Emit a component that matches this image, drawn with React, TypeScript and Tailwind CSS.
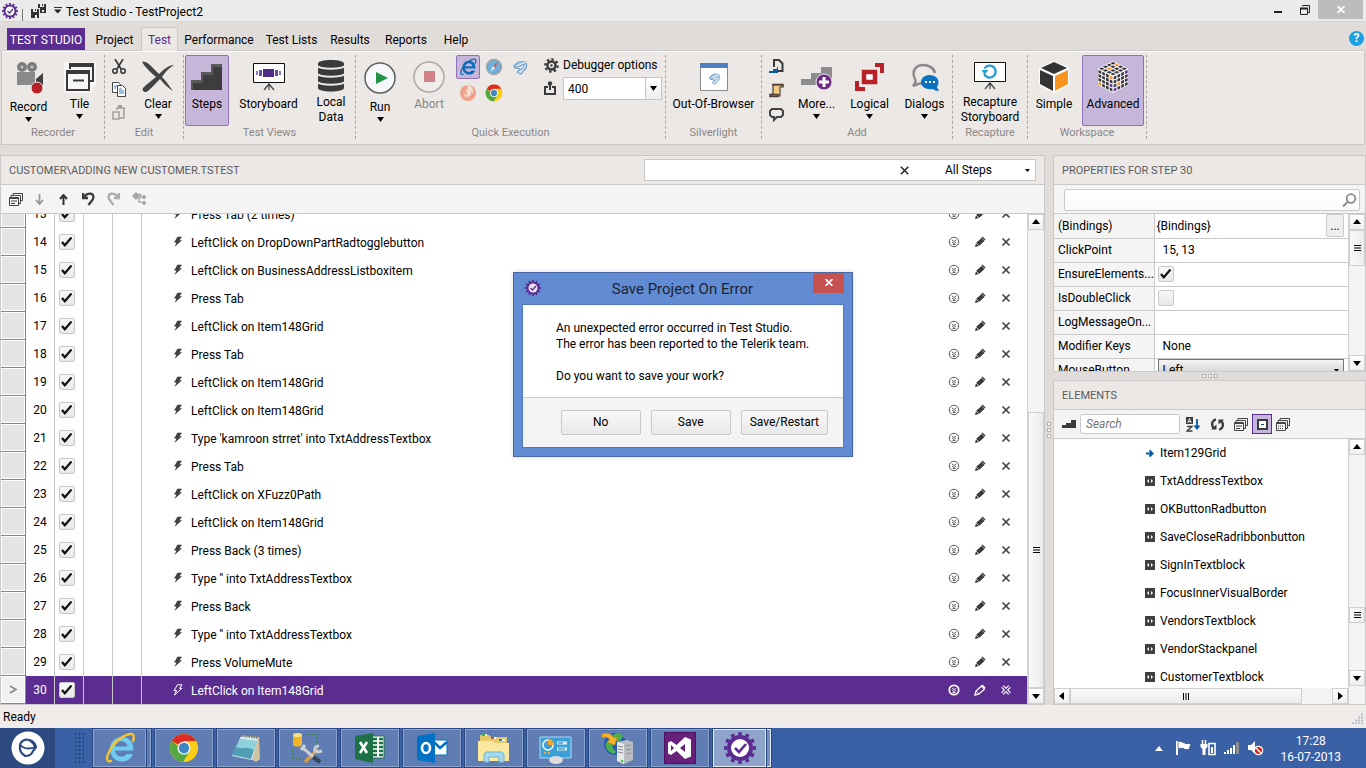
import { ReactNode, useState } from "react";
import clsx from "clsx";

type IconProps = {
	w: number;
	h?: number;
	box?: string;
	className?: string;
	children: ReactNode;
};

const Icon = ({ w, h = w, box, className, children }: IconProps) => (
	<svg
		width={w}
		height={h}
		viewBox={box ?? `0 0 ${w} ${h}`}
		fill="none"
		className={clsx("shrink-0", className)}
		aria-hidden="true"
	>
		{children}
	</svg>
);

const steps = [
	{ id: 13, text: "Press Tab (2 times)" },
	{ id: 14, text: "LeftClick on DropDownPartRadtogglebutton" },
	{ id: 15, text: "LeftClick on BusinessAddressListboxitem" },
	{ id: 16, text: "Press Tab" },
	{ id: 17, text: "LeftClick on Item148Grid" },
	{ id: 18, text: "Press Tab" },
	{ id: 19, text: "LeftClick on Item148Grid" },
	{ id: 20, text: "LeftClick on Item148Grid" },
	{ id: 21, text: "Type 'kamroon strret' into TxtAddressTextbox" },
	{ id: 22, text: "Press Tab" },
	{ id: 23, text: "LeftClick on XFuzz0Path" },
	{ id: 24, text: "LeftClick on Item148Grid" },
	{ id: 25, text: "Press Back (3 times)" },
	{ id: 26, text: "Type '' into TxtAddressTextbox" },
	{ id: 27, text: "Press Back" },
	{ id: 28, text: "Type '' into TxtAddressTextbox" },
	{ id: 29, text: "Press VolumeMute" },
	{ id: 30, text: "LeftClick on Item148Grid" },
];

const elements = [
	"Item129Grid",
	"TxtAddressTextbox",
	"OKButtonRadbutton",
	"SaveCloseRadribbonbutton",
	"SignInTextblock",
	"FocusInnerVisualBorder",
	"VendorsTextblock",
	"VendorStackpanel",
	"CustomerTextblock",
];

/* ---------- shared bits ---------- */

const GearCheck = ({ size, ring = "#5c2d91", hub = "#fff" }: { size: number; ring?: string; hub?: string }) => (
	<Icon w={size} box="0 0 32 32">
		<circle cx="16" cy="16" r="14" stroke={ring} strokeWidth="4" pathLength="24" strokeDasharray="1 1" strokeDashoffset="0.5" />
		<circle cx="16" cy="16" r="13" fill={ring} />
		<circle cx="16" cy="16" r="9" fill={hub} />
		<path d="M11 16l4 4 7-8" stroke={ring} strokeWidth="2.6" />
	</Icon>
);

const Caret = ({ className }: { className?: string }) => (
	<Icon w={7} h={5} className={className}>
		<path d="M0 0h7L3.500 5z" fill="#000" />
	</Icon>
);

const Tick = ({ label, defaultChecked = true }: { label: string; defaultChecked?: boolean }) => (
	<span className="grid size-4 place-items-center">
		<input
			type="checkbox"
			aria-label={label}
			defaultChecked={defaultChecked}
			className="peer size-4 appearance-none rounded-xs border border-[#c8c8c8] bg-linear-to-b from-[#f8f8f8] to-[#e8e8e8] [grid-area:1/1]"
		/>
		<svg
			width="12"
			height="10"
			viewBox="0 0 12 10"
			className="pointer-events-none hidden [grid-area:1/1] peer-checked:block"
			aria-hidden="true"
		>
			<path d="M1 5l2.800 3.300L10.500 .5" fill="none" stroke="#111" strokeWidth="2.200" />
		</svg>
	</span>
);

const arrows = {
	up: "M5 2l4 5H1z",
	down: "M5 8l4-5H1z",
	left: "M2 5l5-4v8z",
	right: "M8 5L3 1v8z",
};

const ScrollButton = ({ dir }: { dir: keyof typeof arrows }) => (
	<button
		aria-label={`Scroll ${dir}`}
		className="flex size-4 shrink-0 items-center justify-center border border-[#d0d0d0] bg-linear-to-b from-white to-[#efefef]"
	>
		<Icon w={10}>
			<path d={arrows[dir]} fill="#000" />
		</Icon>
	</button>
);

const ThumbGrip = () => (
	<Icon w={7} h={6}>
		<path d="M0 .5h7M0 3h7M0 5.500h7" stroke="#000" />
	</Icon>
);

const PanelHeader = ({ title, children }: { title: string; children?: ReactNode }) => (
	<div className="flex h-[29px] shrink-0 items-center border-b border-[#c9c9c9] bg-[#ece8e5] pl-2">
		<h2 className="flex-1 pt-[2px] text-[11px] text-[#5c5c5c]">{title}</h2>
		{children}
	</div>
);

/* ---------- ribbon icons ---------- */

const RecordIcon = () => (
	<Icon w={32} h={34}>
		<circle cx="9" cy="6" r="5" fill="#7d7d7d" />
		<circle cx="19" cy="6" r="5" fill="#7d7d7d" />
		<circle cx="9" cy="6" r="1.500" fill="#c8c8c8" />
		<circle cx="19" cy="6" r="1.500" fill="#c8c8c8" />
		<path d="M4 11h18v13H4z" fill="#8a8a8a" />
		<path d="M23 18l7-6v12h-7z" fill="#3f3f3f" />
		<circle cx="24" cy="27" r="6" fill="#b92025" stroke="#ece8e5" />
	</Icon>
);

const TileIcon = () => (
	<Icon w={32} h={32}>
		<path d="M0 8V1h32v25h-4v6H0z" fill="#f7f6f5" />
		<path d="M6 8V3h23v17h-3" stroke="#3a3a3a" strokeWidth="2" />
		<path d="M5 4.500h25" stroke="#3a3a3a" strokeWidth="3" />
		<path d="M3 10h22v19H3z" stroke="#3a3a3a" strokeWidth="2" />
		<path d="M2 11.500h24" stroke="#3a3a3a" strokeWidth="3" />
		<path d="M9 19.500h11" stroke="#3a3a3a" strokeWidth="2" />
	</Icon>
);

const ClearIcon = () => (
	<Icon w={34} h={32}>
		<path d="M1 1c3-1 6 1 9 4l8 8C23 8 28 4 33 4c-5 3-9 7-12 12 4 4 8 10 11 14-5-3-9-7-13-12C13 24 8 30 5 31c-3 0-4-2-3-4 4-4 9-8 13-11C9 11 4 6 1 1z" fill="#444" />
	</Icon>
);

const StairsIcon = () => (
	<Icon w={32} h={30}>
		<path d="M0 28V18h10v-8h10V2h11v26H0z" fill="#3d3d3d" />
		<path d="M0 20v-2h10v-8h10V2h11v3H22v8H12v8H2v7H0z" fill="#5a5a5a" />
	</Icon>
);

const BoardIcon = ({ children }: { children: ReactNode }) => (
	<Icon w={32} h={30}>
		<path d="M.5 1.500h31v19H.5z" fill="#fff" stroke="#111" strokeWidth="1" />
		<path d="M16 20v8M16 22l-5 6M16 22l5 6" stroke="#444" strokeWidth="1.200" />
		{children}
	</Icon>
);

const DatabaseIcon = () => (
	<Icon w={28} h={33}>
		<path d="M1 4.500C1 2.500 7 1 14 1s13 1.500 13 3.500V29c0 2-6 3.500-13 3.500S1 31 1 29z" fill="#3b3b3b" />
		<path d="M0 7c3 3.500 25 3.500 28 0M0 15c3 3.500 25 3.500 28 0M0 23c3 3.500 25 3.500 28 0" stroke="#ece8e5" strokeWidth="2" />
	</Icon>
);

const SafariIcon = () => (
	<Icon w={18}>
		<circle cx="9" cy="9" r="7.500" fill="#6faed8" stroke="#a3a3a3" strokeWidth="1.500" />
		<path d="M13 4L8 8l2 2z" fill="#d9564f" />
		<path d="M5 14l3-6 2 2z" fill="#e8eef2" />
	</Icon>
);

const SilverlightMark = () => (
	<>
		<path d="M1 8C4 3 10 1 17 3 11 4 6 5 3 10z" fill="#86b2dc" />
		<path d="M3 10l13-5c1 3 0 6-3 8l-3 4-4-2 3-4z" fill="#e3edf6" stroke="#6c96c4" strokeWidth="1.200" />
		<path d="M8 13c3-1 5-3 6-6" stroke="#86b2dc" strokeWidth="1.500" />
	</>
);

const FirefoxIcon = () => (
	<Icon w={18}>
		<circle cx="9" cy="9" r="8" fill="#efa287" />
		<path d="M8 1c4 0 7 4 6 8l-2-2c1 3-1 6-4 6-2 0-3-2-3-3 1 1 3 1 4 0L7 9l1-2-2-1 3-1z" fill="#f8ddd2" />
	</Icon>
);

const ChromeIcon = ({ size }: { size: number }) => (
	<Icon w={size} box="0 0 32 32">
		<circle cx="16" cy="16" r="15" fill="#fbcd17" />
		<path d="M16 16L3 8.500a15 15 0 0 1 26 0H16z" fill="#dd2c24" />
		<path d="M3 8.500a15 15 0 0 0 12 22.400L22 19.500H16z" fill="#54a844" />
		<path d="M3 8.500L10 20l6 2 5-2-6.500 11" fill="#54a844" />
		<circle cx="16" cy="16" r="7" fill="#f2f2f2" />
		<circle cx="16" cy="16" r="5.500" fill="#3c86c6" />
	</Icon>
);

const IeGlyph = ({ size, body, ring }: { size: number; body: string; ring: string }) => (
	<Icon w={size} box="0 0 32 32">
		<path
			d="M11 18.500h18.300C30 10.500 25 5 18 5S6 10 6 17s5 12.500 12 12.500c5 0 9.200-2.500 10.800-7.500h-6.500c-1 1.800-2.400 2.600-4.300 2.600-3.500 0-6.900-2.300-7-6.100zM11 14.500c.5-3 3.600-5.300 6.400-5.300s6 2.300 6.200 5.300z"
			fill={body}
			fillRule="evenodd"
		/>
		<path d="M28.500 10C31 5 30 1.500 26 2 19 3 9 11 5 20c-3.500 7-2 11 3 8.500" stroke={ring} strokeWidth="2.400" />
	</Icon>
);

const CubeIcon = () => (
	<Icon w={32} h={32}>
		<path d="M16 0l15 7v17l-15 8L1 24V7z" fill="#fff" />
		<path d="M16 1l13 6-13 6L3 7z" fill="#333" />
		<path d="M2 9l13 6v15L2 23z" fill="#333" />
		<path d="M30 9l-13 6v15l13-7z" fill="#f7941e" />
	</Icon>
);

const RubikIcon = () => {
	const d = "#333";
	const o = "#f7941e";
	const p = "#5c2d91";
	const faces = [
		{ matrix: "matrix(3.750 1.800 -3.750 1.800 16 .5)", cells: [d, o, d, d, d, d, d, d, d, o, d, d, d, d, d, d] },
		{ matrix: "matrix(3.750 1.800 0 4 1 8.200)", cells: [d, d, d, o, d, d, d, d, d, d, d, p, o, d, d, d] },
		{ matrix: "matrix(3.750 -1.800 0 4 16.200 15.400)", cells: [d, d, d, p, d, d, d, d, d, o, d, d, p, d, d, d] },
	];
	return (
		<Icon w={32} h={32}>
			<path d="M16 0l15 7.500v16.500l-15 8L1 24V7.500z" fill="#f3eff7" />
			{faces.map(({ matrix, cells }) => (
				<g key={matrix} transform={matrix}>
					{cells.map((c, i) => (
						<rect key={i} x={(i % 4) + 0.14} y={Math.floor(i / 4) + 0.14} width=".7" height=".7" fill={c} />
					))}
				</g>
			))}
		</Icon>
	);
};

/* ---------- ribbon ---------- */

const Group = ({ name, className, children }: { name: string; className: string; children: ReactNode }) => (
	<section className={clsx("flex h-[84px] flex-col border-r border-dashed border-[#a9a6a4]", className)}>
		<div className="flex flex-1 items-start">{children}</div>
		<h2 className="text-center text-[11px] leading-3 text-[#8a8785]">{name}</h2>
	</section>
);

type BigButtonProps = {
	label: string;
	className: string;
	icon: ReactNode;
	menu?: boolean;
	active?: boolean;
	disabled?: boolean;
	tall?: boolean;
};

const BigButton = ({ label, className, icon, menu, active, disabled, tall }: BigButtonProps) => (
	<button
		disabled={disabled}
		className={clsx(
			"flex h-[71px] flex-col items-center rounded-xs border leading-[15px]",
			active ? "border-[#9070b8] bg-[#c6b7da]" : "border-transparent",
			disabled ? "text-[#8a8785]" : "text-black",
			className
		)}
	>
		<span className={clsx("flex items-center", tall ? "h-11" : "h-[41px]")}>{icon}</span>
		<span className="whitespace-pre-line">{label}</span>
		{menu && <Caret className="mt-[2px]" />}
	</button>
);

const tabs = [
	{ name: "Project", width: "w-[53px]" },
	{ name: "Test", width: "w-[37px]" },
	{ name: "Performance", width: "w-[82px]" },
	{ name: "Test Lists", width: "w-[63px]" },
	{ name: "Results", width: "w-[54px]" },
	{ name: "Reports", width: "w-[58px]" },
	{ name: "Help", width: "w-[42px]" },
];

const Ribbon = () => {
	const [tab, setTab] = useState("Test");

	return (
		<header className="bg-[#e0dcd9]">
			<div className="flex h-[21px] items-center bg-[#ebebeb] pl-[2px]">
				<GearCheck size={16} />
				<span className="ml-1 h-3 w-px self-end bg-[#777]" />
				<button aria-label="Save all" className="ml-2">
					<Icon w={15} h={14}>
						<path d="M0 5h8v9H0zM7 0h8v9H9V4H7z" fill="#333" />
						<path d="M2 5h4v3H2zM9 0h4v3H9zM4 11h2v3H4zM11 6h2v2h-2z" fill="#ebebeb" />
						<path d="M4 5h1v2H4zM11 0h1v2h-1z" fill="#333" />
					</Icon>
				</button>
				<button aria-label="Customize" className="mr-1 ml-2">
					<Icon w={8} h={7}>
						<path d="M0 .5h8" stroke="#333" />
						<path d="M0 2.500h7.500L3.700 6.500z" fill="#222" />
					</Icon>
				</button>
				<h1 className="flex-1 pt-[2px]">Test Studio - TestProject2</h1>
				<div className="flex h-full items-start">
					<button aria-label="Minimize" className="flex h-[19px] w-[26px] items-center justify-center">
						<Icon w={8} h={8}>
							<path d="M0 6h8" stroke="#222" strokeWidth="2" />
						</Icon>
					</button>
					<button aria-label="Restore" className="flex h-[19px] w-[27px] items-center justify-center">
						<Icon w={10} h={10}>
							<path d="M2.500 1.500V.5h7v7H8M.5 3.500h7v6h-7z" stroke="#222" />
							<path d="M0 3.500h8" stroke="#222" strokeWidth="2" />
						</Icon>
					</button>
					<button aria-label="Close" className="mr-[3px] flex h-[19px] w-[45px] items-center justify-center bg-[#bcbcbc]">
						<Icon w={8} h={7}>
							<path d="M.5 0l7 7m0-7l-7 7" stroke="#fff" strokeWidth="1.800" />
						</Icon>
					</button>
				</div>
			</div>

			<nav className="flex h-[29px] items-end border-t border-[#d8d5d2] pl-[7px]">
				<button className="mr-[3px] h-[22px] w-[78px] bg-[#5c2d91] pt-[2px] text-white">TEST STUDIO</button>
				{tabs.map(({ name, width }) => (
					<button
						key={name}
						onClick={() => setTab(name)}
						className={clsx(
							"relative -mb-px h-[24px] border pt-px",
							width,
							tab === name
								? "border-[#c9c9c9] border-b-[#ece8e5] bg-[#ece8e5] text-[#5c2d91]"
								: "border-transparent"
						)}
					>
						{name}
					</button>
				))}
				<button
					aria-label="Help"
					className="mr-[2px] mb-1 ml-auto size-[15px] rounded-full bg-[#1ba1e2] text-[12px] leading-[15px] font-bold text-white"
				>
					?
				</button>
			</nav>

			<div className="mr-px ml-px flex h-[95px] border border-[#c9c9c9] bg-[#ece8e5] pt-1 shadow-[inset_0_1px_0_#fff]">
				<Group name="Recorder" className="w-[103px]">
					<BigButton label="Record" className="w-[53px]" menu tall icon={<RecordIcon />} />
					<BigButton label="Tile" className="w-[49px]" menu icon={<TileIcon />} />
				</Group>
				<Group name="Edit" className="w-[79px]">
					<div className="flex flex-col gap-2 pt-1 pl-[7px]">
						<button aria-label="Cut">
							<Icon w={14} h={15}>
								<path d="M3 0l6 10M11 0L5 10" stroke="#333" strokeWidth="1.600" />
								<circle cx="3" cy="12" r="2.200" stroke="#333" strokeWidth="1.500" />
								<circle cx="11" cy="12" r="2.200" stroke="#333" strokeWidth="1.500" />
							</Icon>
						</button>
						<button aria-label="Copy">
							<Icon w={14} h={15}>
								<path d="M.5.5h6l2 2v8h-8z" fill="#fff" stroke="#444" />
								<path d="M5.500 3.500h5l3 3v8h-8z" fill="#fff" stroke="#444" />
								<path d="M2 4h3M2 6h2M7 7h3M7 9h5M7 11h5" stroke="#3b78c0" />
							</Icon>
						</button>
						<button aria-label="Paste" disabled>
							<Icon w={14} h={15}>
								<path d="M1 7h6v7H1zM5 5V3h7v10H8" stroke="#a09d9b" strokeWidth="1.500" />
								<path d="M6 0h4v3H6z" fill="#a09d9b" />
							</Icon>
						</button>
					</div>
					<BigButton label="Clear" className="ml-[11px] w-[42px]" menu icon={<ClearIcon />} />
				</Group>
				<Group name="Test Views" className="w-[172px]">
					<BigButton label="Steps" className="ml-[1px] w-[44px]" active icon={<StairsIcon />} />
					<BigButton
						label="Storyboard"
						className="w-[79px]"
						icon={
							<BoardIcon>
								<path d="M10 7h11v8H10z" fill="#4f2c86" />
								<path d="M6 8h3v6H6zM22 8h3v6h-3z" fill="#6650a8" />
								<path d="M3 9h2v4H3zM26 9h2v4h-2z" fill="#8a7cc4" />
							</BoardIcon>
						}
					/>
					<BigButton label={"Local\nData"} className="w-[46px]" icon={<DatabaseIcon />} />
				</Group>
				<Group name="Quick Execution" className="w-[310px]">
					<BigButton
						label="Run"
						className="w-[48px]"
						menu
						tall
						icon={
							<Icon w={32}>
								<circle cx="16" cy="16" r="15" fill="#f7f8fb" stroke="#5f5f5f" strokeWidth="1.500" />
								<path d="M12 10l12 6-12 6z" fill="#1f9444" />
							</Icon>
						}
					/>
					<BigButton
						label="Abort"
						className="w-[50px]"
						disabled
						icon={
							<Icon w={32}>
								<circle cx="16" cy="16" r="15" fill="#efecea" stroke="#aaa" strokeWidth="1.500" />
								<path d="M11 10h11v11H11z" fill="#d08386" />
							</Icon>
						}
					/>
					<div className="grid grid-cols-3 gap-[2px] pl-[2px]">
						<button aria-label="Internet Explorer" className="grid size-6 place-items-center rounded-xs border border-[#9070b8] bg-[#c6b7da]">
							<IeGlyph size={18} body="#0b6db7" ring="#0b6db7" />
						</button>
						<button aria-label="Safari" className="grid size-6 place-items-center">
							<SafariIcon />
						</button>
						<button aria-label="Silverlight" className="grid size-6 place-items-center">
							<Icon w={16} box="0 0 18 18">
								<SilverlightMark />
							</Icon>
						</button>
						<button aria-label="Firefox" className="grid size-6 place-items-center">
							<FirefoxIcon />
						</button>
						<button aria-label="Chrome" className="grid size-6 place-items-center">
							<ChromeIcon size={18} />
						</button>
					</div>
					<div className="flex flex-col gap-1 pt-[2px] pl-3">
						<button className="flex items-center gap-1 leading-4">
							<Icon w={15}>
								<circle cx="7.500" cy="7.500" r="6" stroke="#3b3b3b" strokeWidth="2.600" pathLength="16" strokeDasharray="1 1" />
								<circle cx="7.500" cy="7.500" r="4" stroke="#3b3b3b" strokeWidth="2.400" />
								<circle cx="7.500" cy="7.500" r="1.200" fill="#3b3b3b" />
							</Icon>
							Debugger options
						</button>
						<div className="flex items-center gap-[7px]">
							<Icon w={12} h={15}>
								<path d="M4 6H1v7h10V6H8M6 9V3" stroke="#3b3b3b" strokeWidth="2" />
								<circle cx="6" cy="2.500" r="2.200" fill="#3b3b3b" />
							</Icon>
							<div className="flex h-[23px] w-[99px] border border-[#c4c4c4] bg-white">
								<input aria-label="Delay" defaultValue="400" className="w-0 flex-1 pl-1 outline-none" />
								<button
									aria-label="Delay values"
									className="grid w-4 place-items-center border-l border-[#c4c4c4] bg-linear-to-b from-white to-[#eee]"
								>
									<Caret />
								</button>
							</div>
						</div>
					</div>
				</Group>
				<Group name="Silverlight" className="w-[96px]">
					<BigButton
						label="Out-Of-Browser"
						className="w-[95px]"
						icon={
							<Icon w={28} h={28}>
								<path d="M.5.5h27v27H.5z" fill="#fff" stroke="#8a8a8a" />
								<path d="M0 0h28v5H0z" fill="#4f81c0" />
								<svg x="8" y="9" width="13" height="13" viewBox="0 0 18 18">
									<SilverlightMark />
								</svg>
							</Icon>
						}
					/>
				</Group>
				<Group name="Add" className="w-[191px]">
					<div className="flex flex-col gap-[9px] pt-1 pl-[7px]">
						<button aria-label="Add coded step">
							<Icon w={15}>
								<path d="M5 8V1h5l3.500 3.500V12H9" stroke="#3b3b3b" strokeWidth="2" />
								<path d="M0 14v-2h4v-2h4V8h1v6z" fill="#0b5aa6" />
							</Icon>
						</button>
						<button aria-label="Add script step">
							<Icon w={15}>
								<path d="M4 2h9v2h-2v9H3v-2h1z" fill="#f5cb83" stroke="#4a4038" strokeWidth="1.200" />
								<path d="M3 1.500h11v3M1 11.500h8v2H1z" stroke="#4a4038" strokeWidth="1.500" />
							</Icon>
						</button>
						<button aria-label="Add comment">
							<Icon w={15}>
								<path d="M3 2h9l2 2v4l-2 2H8l-3 3v-3H3L1 8V4z" stroke="#444" strokeWidth="2" />
							</Icon>
						</button>
					</div>
					<BigButton
						label="More..."
						className="ml-2 w-[49px]"
						menu
						icon={
							<Icon w={32} h={26}>
								<path d="M0 15h10V9h10V3h11v18H0z" fill="#8c8c8f" />
								<circle cx="23" cy="18" r="8" fill="#6b2a84" stroke="#ece8e5" strokeWidth="1" />
								<path d="M23 13v10M18 18h10" stroke="#fff" strokeWidth="3" />
							</Icon>
						}
					/>
					<BigButton
						label="Logical"
						className="ml-1 w-[49px]"
						menu
						icon={
							<Icon w={30} h={28}>
								<path d="M20 2h7v8M2 18v8h8" stroke="#b92025" strokeWidth="4" />
								<path d="M9 9h11v10H9z" fill="#fff" stroke="#b92025" strokeWidth="4.500" />
							</Icon>
						}
					/>
					<BigButton
						label="Dialogs"
						className="ml-1 w-[53px]"
						menu
						icon={
							<Icon w={30} h={28}>
								<path d="M13 20c-3 0-7 2-10 3 3-3 3-5 2-7C1 8 6 2 13 2c6 0 11 3 12 8" stroke="#8a8a8a" strokeWidth="2.500" />
								<path d="M19.500 12c5 0 9 3 9 7 0 2-1 4-1.500 5l2 4c-3 0-5-1-6-2-7 1-12-2-12-7 0-4 4-7 8.500-7z" fill="#0b72bf" />
								<path d="M15 19h2M19 19h2M23 19h2" stroke="#fff" strokeWidth="2" />
							</Icon>
						}
					/>
				</Group>
				<Group name="Recapture" className="w-[75px]">
					<BigButton
						label={"Recapture\nStoryboard"}
						className="w-[74px]"
						icon={
							<BoardIcon>
								<path d="M10.500 7.500a6 6 0 1 1-.3 5.500" stroke="#1e9bd7" strokeWidth="2.300" />
								<path d="M7.500 9l7 0-4 4.500z" fill="#1e9bd7" />
							</BoardIcon>
						}
					/>
				</Group>
				<Group name="Workspace" className="w-[119px]">
					<BigButton label="Simple" className="w-[52px]" icon={<CubeIcon />} />
					<BigButton label="Advanced" className="ml-[2px] w-[62px]" active icon={<RubikIcon />} />
				</Group>
			</div>
		</header>
	);
};

/* ---------- steps list ---------- */

const WindowsIcon = ({ dotted }: { dotted?: boolean }) => (
	<Icon w={14} h={13}>
		<path d="M4 2.500V.5h9.500v7h-1.500M2 4V2.500h9.500v8H10" stroke="#444" />
		<path d="M.5 4.500h9v8h-9zM0 5.500h10" stroke="#444" />
		{dotted ? (
			<path d="M2 8h6M2 10.500h6" stroke="#444" strokeDasharray="1 1" />
		) : (
			<path d="M2 8h6M2 10.500h4" stroke="#444" />
		)}
	</Icon>
);

const StepsToolbar = () => (
	<div className="flex h-[29px] shrink-0 items-center gap-3 border-b border-[#c9c9c9] bg-[#f4f4f4] pl-2">
		<button aria-label="Collapse all">
			<WindowsIcon />
		</button>
		<button aria-label="Move down" disabled className="w-2">
			<Icon w={9} h={11}>
				<path d="M4.500 0v10M1 6l3.500 4L8 6" stroke="#999" strokeWidth="1.800" />
			</Icon>
		</button>
		<button aria-label="Move up" className="ml-1">
			<Icon w={9} h={11}>
				<path d="M4.500 11V1M1 5l3.500-4L8 5" stroke="#333" strokeWidth="2" />
			</Icon>
		</button>
		<button aria-label="Undo" className="ml-[2px]">
			<Icon w={13} h={14}>
				<path d="M1 1v5h5M2 5.500C4 1 11 0 11.500 5c0 3-3 5-5 8" stroke="#3b3b3b" strokeWidth="2.300" />
			</Icon>
		</button>
		<button aria-label="Redo" disabled>
			<Icon w={13} h={14}>
				<path d="M12 1v5H7M11 5.500C9 1 2 0 1.500 5c0 3 3 5 5 8" stroke="#aaa" strokeWidth="2.300" />
			</Icon>
		</button>
		<button aria-label="Convert" disabled>
			<Icon w={14}>
				<path d="M0 4l4-4 4 4-4 4z" fill="#a5a5a5" />
				<path d="M7 2.500h2v3H7zM7 5v5h3" stroke="#aaa" strokeWidth="1.300" />
				<path d="M12 3l2 2-2 2-2-2zM12 9l2 2-2 2-2-2z" fill="#a5a5a5" stroke="#aaa" />
			</Icon>
		</button>
	</div>
);

const StepRow = ({ id, text, selected }: { id: number; text: string; selected: boolean }) => {
	const line = "w-[29px] shrink-0 border-r border-[#c9c9c9]";
	const ink = selected ? "#fff" : "#555";

	return (
		<li className="flex h-7 shrink-0">
			<span
				className={clsx(
					"flex w-[25px] items-center justify-center border-r border-b border-[#858585] pb-px shadow-[inset_0_0_0_1px_#fff]",
					selected ? "bg-[#f1f1f1]" : "bg-[#e4e4e4]"
				)}
			>
				{selected && (
					<Icon w={9} h={9}>
						<path d="M1 1l6 3.500L1 8" stroke="#888" strokeWidth="1.600" />
					</Icon>
				)}
			</span>
			<div className={clsx("flex flex-1 items-stretch", selected && "bg-[#5c2d91] text-white")}>
				<span className={clsx(line, "flex items-center justify-center")}>{id}</span>
				<span className={clsx(line, "flex items-center pl-1")}>
					<Tick label={`Step ${id} enabled`} />
				</span>
				<span className={line} />
				<span className={line} />
				<span className="flex flex-1 items-center pl-[31px]">
					<Icon w={10} h={12} className="mr-2">
						<path
							d="M4.500.8H9L6.500 4.300H9L1.500 11 3.500 6.500H1z"
							fill={selected ? "#5c2d91" : "#3f3f3f"}
							stroke={selected ? "#fff" : "none"}
						/>
					</Icon>
					<span className="pt-[2px]">{text}</span>
				</span>
				<span className="flex items-center gap-[14px] pr-[15px]">
					<button aria-label={`Details of step ${id}`}>
						<Icon w={12}>
							<circle cx="6" cy="6" r="4.700" stroke={ink} strokeWidth={selected ? 1.8 : 1} />
							<path d="M4 4l2 1.500L8 4M4 6l2 1.500L8 6M4.500 8.500h3" stroke={ink} strokeWidth=".9" />
						</Icon>
					</button>
					<button aria-label={`Edit step ${id}`}>
						<Icon w={12}>
							<path
								d="M1 11l1-4 5.500-5 3 3L5 10z"
								fill={selected ? "#5c2d91" : "#3b3b3b"}
								stroke={selected ? "#fff" : "none"}
								strokeWidth="1.300"
							/>
							<path d="M8 1l3 3" stroke={selected ? "#fff" : "#3b3b3b"} strokeWidth="1.500" />
							<path d="M2 7l3 3" stroke={selected ? "#fff" : "#e8e8e8"} strokeWidth=".8" />
						</Icon>
					</button>
					<button aria-label={`Delete step ${id}`}>
						<Icon w={12}>
							<path d="M2.500 2.500l7 7M9.500 2.500l-7 7" stroke={selected ? "#fff" : "#444"} strokeWidth={selected ? 3.6 : 1.7} />
							{selected && <path d="M2.500 2.500l7 7M9.500 2.500l-7 7" stroke="#5c2d91" strokeWidth="1.200" />}
						</Icon>
					</button>
				</span>
			</div>
		</li>
	);
};

const StepsPanel = () => (
	<section className="flex min-w-0 flex-1 flex-col border border-[#c9c9c9] bg-white">
		<PanelHeader title="CUSTOMER\ADDING NEW CUSTOMER.TSTEST">
			<div className="mr-2 flex h-[22px] w-[392px] items-center border border-[#c9c9c9] bg-white">
				<input aria-label="Find step" className="w-0 flex-1 px-1 outline-none" />
				<button aria-label="Clear search" className="mr-[6px]">
					<Icon w={9} h={9}>
						<path d="M.8.8l7.500 7.500m0-7.500L.8 8.300" stroke="#222" strokeWidth="1.500" />
					</Icon>
				</button>
				<label className="flex h-full w-[120px] items-center">
					<select aria-label="Step filter" className="h-full flex-1 appearance-none bg-transparent pl-[30px] outline-none">
						<option>All Steps</option>
					</select>
					<Icon w={5} h={3} className="mr-[5px]">
						<path d="M0 0h5L2.500 3z" fill="#000" />
					</Icon>
				</label>
			</div>
		</PanelHeader>
		<StepsToolbar />
		<div className="flex min-h-0 flex-1">
			<ul className="flex flex-1 flex-col justify-end overflow-hidden">
				{steps.map((step) => (
					<StepRow key={step.id} {...step} selected={step.id === 30} />
				))}
			</ul>
			<div className="flex w-[17px] flex-col border-l border-[#d0d0d0] bg-[#f4f4f4]">
				<ScrollButton dir="up" />
				<div className="flex-[40]" />
				<div className="flex flex-[60] items-center justify-center border border-[#d0d0d0] bg-linear-to-r from-[#fafafa] to-[#ebebeb]">
					<ThumbGrip />
				</div>
				<ScrollButton dir="down" />
			</div>
		</div>
	</section>
);

/* ---------- right column ---------- */

const PropertyRow = ({ name, children }: { name: string; children?: ReactNode }) => (
	<tr className="h-6 border-b border-[#c9c9c9]">
		<th scope="row" className="w-[100px] border-r border-[#c9c9c9] bg-[#f4f4f4] pl-1 text-left font-normal whitespace-nowrap">
			{name}
		</th>
		<td className="p-0">{children}</td>
	</tr>
);

const PropertiesPanel = () => (
	<section className="flex h-[217px] shrink-0 flex-col border border-[#c9c9c9] bg-[#f4f4f4]">
		<PanelHeader title="PROPERTIES FOR STEP 30" />
		<div className="h-[29px] shrink-0 border-b border-[#c9c9c9] pt-1 pr-[5px] pl-[10px]">
			<div className="flex h-[22px] items-center rounded-xs border border-[#c9c9c9] bg-linear-to-b from-white to-[#fafafa]">
				<input aria-label="Search properties" className="w-0 flex-1 px-1 outline-none" />
				<button aria-label="Search" className="mr-[2px]">
					<Icon w={15}>
						<circle cx="9" cy="5.500" r="4.300" stroke="#8d8d8d" strokeWidth="1.800" />
						<path d="M6 8.500l-5 5" stroke="#8d8d8d" strokeWidth="2" />
					</Icon>
				</button>
			</div>
		</div>
		<div className="flex min-h-0 flex-1">
			<div className="flex-1 overflow-hidden bg-white">
				<table className="w-full table-fixed border-collapse">
					<tbody>
						<PropertyRow name="(Bindings)">
							<div className="flex h-[23px] items-center justify-between pl-[2px]">
								{"{Bindings}"}
								<button
									aria-label="Edit bindings"
									className="mr-1 h-[23px] w-[18px] rounded-xs border border-[#c9c9c9] bg-[#efefef]"
								>
									...
								</button>
							</div>
						</PropertyRow>
						<PropertyRow name="ClickPoint">
							<span className="pl-2">15, 13</span>
						</PropertyRow>
						<PropertyRow name="EnsureElements...">
							<div className="pl-[3px]">
								<Tick label="EnsureElements" />
							</div>
						</PropertyRow>
						<PropertyRow name="IsDoubleClick">
							<div className="pl-[3px]">
								<Tick label="IsDoubleClick" defaultChecked={false} />
							</div>
						</PropertyRow>
						<PropertyRow name="LogMessageOn..." />
						<PropertyRow name="Modifier Keys">
							<span className="pl-2">None</span>
						</PropertyRow>
						<PropertyRow name="MouseButton">
							<label className="mr-1 ml-[3px] flex h-[22px] items-center border border-[#777] bg-linear-to-b from-[#f4f4f4] to-[#c4c4c4]">
								<select aria-label="MouseButton" className="h-full flex-1 appearance-none pl-1 outline-none">
									<option>Left</option>
								</select>
								<Icon w={5} h={3} className="mr-1">
									<path d="M0 0h5L2.500 3z" fill="#000" />
								</Icon>
							</label>
						</PropertyRow>
					</tbody>
				</table>
			</div>
			<div className="flex w-[17px] flex-col border-l border-[#d0d0d0]">
				<ScrollButton dir="up" />
				<div className="flex h-9 items-center justify-center border border-[#d0d0d0] bg-linear-to-r from-[#fafafa] to-[#ebebeb]">
					<ThumbGrip />
				</div>
				<div className="flex-1" />
				<ScrollButton dir="down" />
			</div>
		</div>
	</section>
);

const Dots = ({ className }: { className?: string }) => (
	<span className={clsx("flex items-center justify-center gap-[2px]", className)}>
		{[0, 1, 2].map((n) => (
			<span key={n} className="size-1 border border-[#b5b2b0] bg-white" />
		))}
	</span>
);

const ElementsPanel = () => (
	<section className="flex min-h-0 flex-1 flex-col border border-[#c9c9c9] bg-white">
		<PanelHeader title="ELEMENTS" />
		<div className="flex h-[29px] shrink-0 items-center border-b border-[#c9c9c9] bg-[#f4f4f4] pl-2">
			<button aria-label="Show steps">
				<Icon w={14} h={10}>
					<path d="M0 9V6h4V4h5V1h5v8z" fill="#3b3b3b" />
				</Icon>
			</button>
			<input
				aria-label="Search elements"
				placeholder="Search"
				className="mr-[6px] ml-1 h-5 w-[100px] rounded-xs border border-[#c9c9c9] bg-white pl-[5px] italic outline-none placeholder:text-[#777]"
			/>
			<button aria-label="Sort" className="mr-[11px]">
				<Icon w={14} h={15}>
					<path d="M0 0h7v7H0z" fill="#3b3b3b" />
					<path d="M1.800 6l1.700-4.500L5.200 6M2.500 4.500h2" stroke="#fff" strokeWidth=".9" />
					<path d="M1 9.500h5L1 14h5.500" stroke="#3b3b3b" strokeWidth="1.400" />
					<path d="M11 2v9M8.500 8.500L11 11.500l2.500-3" stroke="#0b5aa6" strokeWidth="1.800" />
				</Icon>
			</button>
			<button aria-label="Refresh" className="mr-[10px]">
				<Icon w={13} h={13}>
					<path d="M5 1.500C2 2 .5 5 1.500 8l1 2M8 11.500c3-.5 4.500-3.500 3.500-6.500l-1-2" stroke="#3b3b3b" strokeWidth="2.400" />
					<path d="M0 11.500h5.500V6.500zM13 1.500H7.500V6.500z" fill="#3b3b3b" />
				</Icon>
			</button>
			<button aria-label="Collapse all" className="mr-1">
				<WindowsIcon />
			</button>
			<button aria-label="Highlight" className="mr-1 grid size-5 place-items-center border border-[#5c2d91] bg-[#c6b7da]">
				<Icon w={11} h={11}>
					<path d="M1 1h9v9H1z" fill="#fff" stroke="#3b3b3b" strokeWidth="2" />
					<path d="M4 5.500h3" stroke="#0b5aa6" />
				</Icon>
			</button>
			<button aria-label="Expand all">
				<WindowsIcon dotted />
			</button>
		</div>
		<div className="flex min-h-0 flex-1">
			<div className="flex min-w-0 flex-1 flex-col">
				<ul className="flex-1 overflow-hidden">
					{elements.map((name, i) => (
						<li key={name} className="flex h-7 items-center gap-1 pl-[91px]">
							{i === 0 ? (
								<Icon w={10} h={9} className="mr-px">
									<path d="M1 4.500h6M4.500 1.500l3 3-3 3" stroke="#0b5aa6" strokeWidth="2" />
								</Icon>
							) : (
								<Icon w={10} h={10} className="mr-px">
									<path d="M0 0h10v10H0z" fill="#3f3f3f" />
									<path d="M4 3L2 5l2 2zM6 3l2 2-2 2z" fill="#fff" />
								</Icon>
							)}
							{name}
						</li>
					))}
				</ul>
				<div className="flex h-4 shrink-0 bg-[#f4f4f4]">
					<ScrollButton dir="left" />
					<div className="flex flex-[23] items-center justify-center border border-[#d0d0d0] bg-linear-to-b from-[#fafafa] to-[#ebebeb]">
						<Icon w={6} h={7}>
							<path d="M.5 0v7M3 0v7M5.500 0v7" stroke="#000" />
						</Icon>
					</div>
					<div className="flex-[3]" />
					<ScrollButton dir="right" />
				</div>
			</div>
			<div className="flex w-[17px] flex-col border-l border-[#d0d0d0] bg-[#f4f4f4] pb-[18px]">
				<ScrollButton dir="up" />
				<div className="flex-[152]" />
				<div className="flex h-4 items-center justify-center border border-[#d0d0d0] bg-linear-to-r from-[#fafafa] to-[#ebebeb]">
					<ThumbGrip />
				</div>
				<div className="flex-[47]" />
				<ScrollButton dir="down" />
			</div>
		</div>
	</section>
);

/* ---------- error dialog ---------- */

const SaveDialog = () => (
	<div className="absolute inset-0 flex items-center justify-center">
		<div
			role="dialog"
			aria-labelledby="save-title"
			className="flex w-[340px] flex-col border border-[#4868a5] bg-[#618cd3] px-2 pb-2 shadow-[0_0_5px_rgba(0,0,0,0.15)]"
		>
			<div className="flex h-[31px] items-start">
				<span className="mt-[7px] ml-[3px]">
					<GearCheck size={16} hub="#e8e4f4" />
				</span>
				<h2 id="save-title" className="flex-1 pt-[6px] pl-[11px] text-center text-[15px] leading-5 text-[#1c2430]">
					Save Project On Error
				</h2>
				<button aria-label="Close" className="grid h-5 w-[31px] place-items-center bg-[#c75050]">
					<Icon w={8} h={7}>
						<path d="M.5 0l7 7m0-7l-7 7" stroke="#fff" strokeWidth="1.600" />
					</Icon>
				</button>
			</div>
			<div className="border border-[#5079bd] bg-white">
				<p className="h-[92px] pt-[15px] pl-[33px] leading-4 whitespace-pre-line">
					{"An unexpected error occurred in Test Studio.\nThe error has been reported to the Telerik team.\n\nDo you want to save your work?"}
				</p>
				<div className="flex h-[50px] items-center justify-end gap-[10px] border-t border-[#c9c9c9] bg-[#f4f4f4] pr-[15px]">
					{["No", "Save", "Save/Restart"].map((label) => (
						<button
							key={label}
							className="h-[25px] min-w-20 rounded-xs border border-[#c9c9c9] bg-linear-to-b from-[#f8f8f8] to-[#e9e9e9] px-2"
						>
							{label}
						</button>
					))}
				</div>
			</div>
		</div>
	</div>
);

/* ---------- taskbar ---------- */

const taskIcons: { name: string; stacked?: boolean; active?: boolean; icon: ReactNode }[] = [
	{ name: "Internet Explorer", stacked: true, icon: <IeGlyph size={32} body="#6fcdf4" ring="#f4c430" /> },
	{ name: "Chrome", icon: <ChromeIcon size={30} /> },
	{
		name: "Notepad",
		icon: (
			<Icon w={32}>
				<path d="M11 3l18 2 1 22-4 3-5-3z" fill="#cfc3a0" />
				<path d="M11 4l17 2-6 22-20-4z" fill="#d6eef2" />
				<path d="M10 7l17 2-6 18-19-4z" fill="#4fa0b4" />
				<path d="M10 7l17 2-3 9C16 13 11 18 6 15z" fill="#8fd0da" />
				<path d="M11 3.500l17 2" stroke="#777" strokeWidth="2.500" strokeDasharray="1.500 1" />
			</Icon>
		),
	},
	{
		name: "Tools",
		icon: (
			<Icon w={32}>
				<path d="M15 3h10v12M1 17v10h11" stroke="#3f8a2c" strokeWidth="1.600" strokeDasharray="2 2" />
				<path d="M1 3v10c0 2 9 2 9 0V3z" fill="#f0b428" />
				<ellipse cx="5.500" cy="3" rx="4.500" ry="2" fill="#fbe08a" />
				<path d="M13 30l13-13" stroke="#f0a030" strokeWidth="3" />
				<path d="M11 16l16 14M9 18l4-5M27 14c-4 0-5 3-4 5l3 1 4-1" stroke="#c9ced6" strokeWidth="3" />
				<path d="M21 25l7 5" stroke="#33435e" strokeWidth="4" />
			</Icon>
		),
	},
	{
		name: "Excel",
		icon: (
			<Icon w={32}>
				<path d="M17 4h13v22H17z" fill="#fff" stroke="#1e7145" />
				<path d="M19 7h4M19 11h4M19 15h4M19 19h4M19 23h4M25 7h4M25 11h4M25 15h4M25 19h4M25 23h4" stroke="#1e7145" strokeWidth="2.500" />
				<path d="M1 4l18-3v30L1 27z" fill="#1e7145" />
				<path d="M6 10l7 11M13 10L6 21" stroke="#fff" strokeWidth="2.600" />
			</Icon>
		),
	},
	{
		name: "Outlook",
		icon: (
			<Icon w={32}>
				<path d="M18 8h13v15H18z" fill="#fff" stroke="#0072c6" />
				<path d="M18 10l6 6 7-6" stroke="#0072c6" strokeWidth="2.500" />
				<path d="M1 4l18-3v30L1 28z" fill="#0072c6" />
				<ellipse cx="10" cy="16" rx="4" ry="5" stroke="#fff" strokeWidth="2.600" />
			</Icon>
		),
	},
	{
		name: "File Explorer",
		icon: (
			<Icon w={34} h={32}>
				<path d="M3 8V3h9l2 2h16v23H2z" fill="#e8c766" />
				<path d="M5 2h5v2H5zM14 5h5v2h-5zM22 7h6v2h-6z" fill="#fff" />
				<path d="M5 2h3v2H5z" fill="#37b34a" />
				<path d="M14 5h3v2h-3z" fill="#d9442e" />
				<path d="M22 7h3v2h-3z" fill="#2e7fd9" />
				<path d="M1 9h15l2 2h14v18H1z" fill="#fae7a0" />
				<path d="M7 30v-8l2-2h16l2 2v8h-5v-5H12v5z" fill="#a7d8ee" stroke="#6db3d4" />
			</Icon>
		),
	},
	{
		name: "Control Panel",
		icon: (
			<Icon w={34} h={32}>
				<path d="M1 5h31v21H1z" fill="#3d9fd6" stroke="#a9dbf5" />
				<circle cx="9" cy="13" r="5" stroke="#fff" strokeWidth="1.500" />
				<path d="M9 13V7c4 0 6 3 6 6z" fill="#f4a72c" />
				<path d="M18 11h10M18 17h10" stroke="#d9f1fc" strokeWidth="3" />
				<path d="M19 11h5M19 17h7" stroke="#1e6fa8" strokeWidth="1" />
				<path d="M5 21h2M9 21h2" stroke="#f4a72c" strokeWidth="2" />
				<ellipse cx="17" cy="28" rx="7" ry="4" fill="#dcdcdc" />
			</Icon>
		),
	},
	{
		name: "Web Server",
		icon: (
			<Icon w={34} h={32}>
				<circle cx="14" cy="12" r="11" fill="#2458b8" />
				<path d="M12 3c4-3 9-2 10 2l-3 4-5 1-3 5 4 5-2 2C6 20 4 15 5 11z" fill="#4cb04a" />
				<path d="M1 2c5-2 10 0 12 4l3-1-2 8-8-3 3-2C7 5 4 4 1 6z" fill="#f7b32b" stroke="#c98410" strokeWidth=".6" />
				<path d="M16 10l10-2 6 2v18l-9 4-7-3z" fill="#b9bdc1" />
				<path d="M16 10l7 2v20l-7-3z" fill="#e6e8ea" />
				<path d="M17 14l5 1M17 17l5 1M17 20l5 1M25 14l5-1M25 18l5-1M25 22l5-1" stroke="#8a8d90" />
				<circle cx="21" cy="29" r="1.300" fill="#3ad43a" />
			</Icon>
		),
	},
	{
		name: "Visual Studio",
		icon: (
			<Icon w={32}>
				<path d="M.5.5h31v31H.5z" fill="#68217a" stroke="#4d1260" />
				<path d="M21 5l6 2.500v17L21 27l-8.500-8L7 23l-3-1.500v-11L7 9l5.500 4zM21 12l-5 4 5 4zM7 13v6l3-3z" fill="#fff" fillRule="evenodd" />
			</Icon>
		),
	},
	{ name: "Test Studio", stacked: true, active: true, icon: <GearCheck size={32} /> },
];

const Taskbar = () => (
	<footer className="flex h-10 shrink-0 items-stretch bg-[#3a61a6] text-white">
		<button aria-label="Start" className="grid w-[55px] place-items-center bg-[#2c4a80]">
			<Icon w={34}>
				<circle cx="17" cy="17" r="16.500" fill="#fff" />
				<path d="M9 15c0-5 5-7 9-6 3 0 6 3 7 7-1 2-2 3-3 4-1 3-4 5-8 5-3-2-6-5-5-10z" stroke="#2c4a80" strokeWidth="2.200" strokeLinejoin="round" />
				<path d="M9 15c3 0 3 2 5 2 3 1 8 0 11-1M18 9c3 2 5 4 6 7" stroke="#2c4a80" strokeWidth="1.800" />
			</Icon>
		</button>
		<Icon w={9} h={31} className="mr-2 ml-5 self-center">
			{[0, 4, 8].map((x) => (
				<path key={x} d={`M${x + 0.5} 0v31`} stroke="#22407a" strokeWidth="1.500" strokeDasharray="2 2" />
			))}
		</Icon>
		<div className="flex gap-[2px]">
			{taskIcons.map((task) => (
				<button
					key={task.name}
					aria-label={task.name}
					className="flex w-[60px] border border-[#27467f] bg-[#27467f]"
				>
					<span
						className={clsx(
							"grid h-full flex-1 place-items-center border",
							task.active ? "border-[#e4eaf4] bg-[#8fa4cb]" : "border-[#8ea5d0] bg-[#5f7cb3]"
						)}
					>
						{task.icon}
					</span>
					{task.stacked && (
						<span
							className={clsx(
								"ml-px h-full w-1 border border-l-0",
								task.active ? "border-[#e4eaf4] bg-[#7690c0]" : "border-[#8ea5d0] bg-[#5f7cb3]"
							)}
						/>
					)}
				</button>
			))}
		</div>
		<div className="ml-auto flex items-center gap-2 pr-[25px]">
			<button aria-label="Show hidden icons" className="mr-1">
				<Icon w={8} h={5}>
					<path d="M4 0l4 5H0z" fill="#fff" />
				</Icon>
			</button>
			<Icon w={17} h={16}>
				<path d="M2 1v14" stroke="#fff" strokeWidth="2" />
				<path d="M3 1.500c3-1 4 1 6 1l1 1h6l-2 6h-4c-2-2-5-1-7-1z" fill="#fff" stroke="#1d3768" strokeWidth=".6" />
			</Icon>
			<Icon w={16} h={16}>
				<path d="M2.500 0v4M5.500 0v4" stroke="#fff" strokeWidth="1.500" />
				<path d="M.5 4h7v3l-2 2v6h-3V9l-2-2z" fill="#fff" />
				<path d="M9 3.500h6v11H9z" stroke="#fff" strokeWidth="1.600" />
				<path d="M11 7h2v6h-2z" fill="#fff" />
			</Icon>
			<Icon w={16} h={14}>
				<path d="M0 11h2v2H0zM3 9h2v4H3zM6 7h2v6H6zM9 4h2v9H9z" fill="#fff" />
				<path d="M12 1h3v12h-3z" fill="#8b8f97" />
			</Icon>
			<Icon w={16} h={16}>
				<path d="M0 5h3l4-4v13l-4-4H0z" fill="#fff" />
				<circle cx="10.500" cy="10.500" r="4.200" fill="#d9201c" stroke="#fff" strokeWidth="1.200" />
				<path d="M8 8l5 5" stroke="#fff" strokeWidth="1.500" />
			</Icon>
			<time className="ml-2 pt-px text-center leading-4">
				17:28
				<br />
				16-07-2013
			</time>
		</div>
	</footer>
);

const App = () => (
	<div className="flex h-screen flex-col overflow-hidden bg-[#e0dcd9] font-[Roboto,'Open_Sans',sans-serif] text-[12px] text-black">
		<div className="relative flex min-h-0 flex-1 flex-col">
			<Ribbon />
			<main className="mt-[10px] flex min-h-0 flex-1">
				<StepsPanel />
				<Dots className="w-2 flex-col" />
				<aside className="flex w-[313px] flex-col">
					<PropertiesPanel />
					<Dots className="h-2" />
					<ElementsPanel />
				</aside>
			</main>
			<div className="flex h-[23px] shrink-0 items-center bg-[#f0ecea] px-[3px]">
				<span className="flex-1">Ready</span>
				<Icon w={11} className="mb-1 self-end">
					<path d="M9 1.500h2M6 4.500h5M3 7.500h8M0 10.500h11" stroke="#b9bec8" strokeWidth="2" strokeDasharray="2 1" />
				</Icon>
			</div>
			<SaveDialog />
		</div>
		<Taskbar />
	</div>
);

export default App;
